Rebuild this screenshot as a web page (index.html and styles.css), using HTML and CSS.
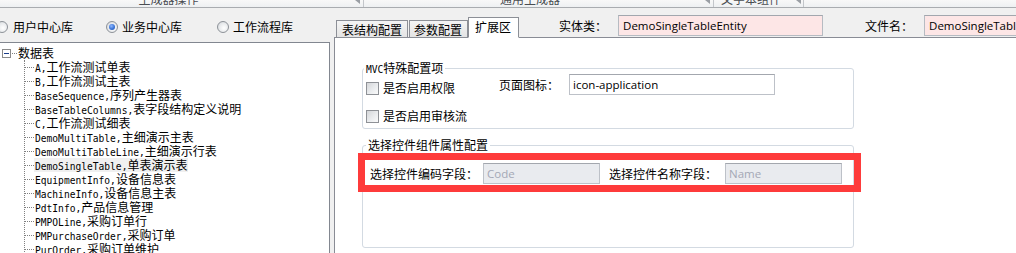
FILE: index.html
```html
<!DOCTYPE html>
<html lang="zh-CN">
<head>
<meta charset="utf-8">
<title>配置</title>
<link rel="stylesheet" href="styles.css">
</head>
<body>
<div class="ribbon">
  <div class="rgroup g1"><span class="rlabel">生成器操作</span><span class="launcher"><i></i></span></div>
  <div class="rgroup g2"><span class="rlabel">通用生成器</span><span class="launcher"><i></i></span></div>
  <div class="rgroup g3"><span class="rlabel">文字本组件</span><span class="launcher"><i></i></span></div>
</div>
<div class="main">
  <div class="left">
    <div class="radios">
      <label class="radio r1"><span class="circle"></span>用户中心库</label>
      <label class="radio r2"><span class="circle on"></span>业务中心库</label>
      <label class="radio r3"><span class="circle"></span>工作流程库</label>
    </div>
    <div class="tree">
      <div class="root"><span class="expander"></span><span class="rootdots"></span><span class="t">数据表</span></div>
      <ul class="children">
        <li><span class="t"><span class="code">A,</span>工作流测试单表</span></li>
        <li><span class="t"><span class="code">B,</span>工作流测试主表</span></li>
        <li><span class="t"><span class="code">BaseSequence,</span>序列产生器表</span></li>
        <li><span class="t"><span class="code">BaseTableColumns,</span>表字段结构定义说明</span></li>
        <li><span class="t"><span class="code">C,</span>工作流测试细表</span></li>
        <li><span class="t"><span class="code">DemoMultiTable,</span>主细演示主表</span></li>
        <li><span class="t"><span class="code">DemoMultiTableLine,</span>主细演示行表</span></li>
        <li><span class="t sel"><span class="code">DemoSingleTable,</span>单表演示表</span></li>
        <li><span class="t"><span class="code">EquipmentInfo,</span>设备信息表</span></li>
        <li><span class="t"><span class="code">MachineInfo,</span>设备信息主表</span></li>
        <li><span class="t"><span class="code">PdtInfo,</span>产品信息管理</span></li>
        <li><span class="t"><span class="code">PMPOLine,</span>采购订单行</span></li>
        <li><span class="t"><span class="code">PMPurchaseOrder,</span>采购订单</span></li>
        <li><span class="t"><span class="code">PurOrder,</span>采购订单维护</span></li>
      </ul>
    </div>
  </div>
  <div class="right">
    <div class="header">
      <div class="tabs">
        <span class="tab t1">表结构配置</span><span class="tab t2">参数配置</span><span class="tab active">扩展区</span>
      </div>
      <span class="hlabel l1">实体类：</span><span class="pink w1">DemoSingleTableEntity</span>
      <span class="hlabel l2">文件名：</span><span class="pink w2">DemoSingleTableEntity</span>
    </div>
    <div class="panel">
      <fieldset class="fs fs1">
        <legend><span class="code">MVC</span>特殊配置项</legend>
        <div class="fsrow">
          <div class="checks">
            <label class="check"><span class="box"></span>是否启用权限</label>
            <label class="check c2"><span class="box"></span>是否启用审核流</label>
          </div>
          <div class="iconfield">
            <span class="flabel">页面图标：</span><span class="text wide">icon-application</span>
          </div>
        </div>
      </fieldset>
      <fieldset class="fs fs2">
        <legend>选择控件组件属性配置</legend>
        <div class="pickrow">
          <span class="flabel">选择控件编码字段：</span><span class="text dis">Code</span>
          <span class="flabel second">选择控件名称字段：</span><span class="text dis">Name</span>
        </div>
      </fieldset>
      <div class="highlight"></div>
    </div>
  </div>
</div>
</body>
</html>
```
FILE: styles.css
```css
* { box-sizing: border-box; }
html, body { margin: 0; padding: 0; }
body {
  width: 1016px;
  height: 253px;
  overflow: hidden;
  background: #f0f0f0;
  font-family: "Noto Sans CJK SC", "Noto Sans", sans-serif;
  font-size: 12px;
  color: #000;
}

/* ribbon strip (cut off at top) */
.ribbon {
  height: 8px;
  display: flex;
  overflow: hidden;
  background: linear-gradient(#f8f8f8, #eef0f2);
  border-bottom: 1px solid #a9acb0;
}
.rgroup {
  display: flex;
  flex: none;
  height: 7px;
  border-right: 1px solid #c3c6ca;
}
.g1 { width: 364px; }
.g2 { width: 350px; }
.g3 { width: 90px; }
.rlabel {
  flex: 1;
  text-align: center;
  line-height: 14px;
  margin-top: -8px;
  color: #4a4d52;
  white-space: nowrap;
}
.launcher {
  display: flex;
  justify-content: flex-end;
  padding-right: 3px;
}
.g1 .launcher { width: 26px; }
.g2 .launcher { width: 17px; }
.g3 .launcher { width: 15px; padding-right: 2px; }
.launcher i {
  width: 5px;
  height: 4px;
  background: #9a9ea4;
  clip-path: polygon(0 0, 100% 0, 100% 100%);
}

.main {
  display: flex;
  height: 245px;
  overflow: hidden;
}

/* left column */
.left {
  width: 330px;
  flex: none;
  display: flex;
  flex-direction: column;
}
.radios {
  height: 34px;
  padding-top: 4px;
  display: flex;
  align-items: center;
}
.radio {
  display: flex;
  flex: none;
  align-items: center;
  gap: 4px;
  line-height: 16px;
  white-space: nowrap;
}
.r1 { width: 110px; margin-left: -4px; gap: 5px; }
.r2 { width: 111px; }
.circle {
  width: 12px;
  height: 12px;
  border-radius: 50%;
  border: 1px solid #8d9298;
  background: radial-gradient(circle at 60% 60%, #ffffff 0%, #e8eaec 55%, #c9cdd2 100%);
  display: flex;
  align-items: center;
  justify-content: center;
}
.circle.on::after {
  content: "";
  width: 6px;
  height: 6px;
  border-radius: 50%;
  background: radial-gradient(circle at 40% 35%, #8fb8ff 0%, #3b74d6 55%, #1d4ea8 100%);
}

.tree {
  flex: 1;
  background: #fff;
  border-top: 1px solid #828790;
  border-right: 1px solid #828790;
  padding-top: 3px;
  overflow: hidden;
}
.root {
  height: 14px;
  display: flex;
  align-items: center;
  padding-left: 2px;
}
.expander {
  width: 9px;
  height: 9px;
  border: 1px solid #8a8a8a;
  background: #fff;
  display: flex;
  align-items: center;
  justify-content: center;
}
.expander::after {
  content: "";
  width: 5px;
  height: 1px;
  background: #1a3d8a;
}
.rootdots {
  width: 5px;
  border-top: 1px dotted #808080;
  margin: 0 1px 0 1px;
}
.t { display: block; height: 14px; line-height: 14px; white-space: nowrap; padding-right: 1px; }
.code {
  font-family: "DejaVu Sans Mono", monospace;
  font-size: 9.6px;
  line-height: 1;
}
.children {
  list-style: none;
  margin: 0 0 0 24px;
  padding: 0;
  border-left: 1px dotted #808080;
}
.children li {
  height: 14px;
  display: flex;
  align-items: center;
}
.children li::before {
  content: "";
  width: 9px;
  border-top: 1px dotted #808080;
  margin-right: 1px;
}
.t.sel { background: #f0f0f0; padding-left: 1px; margin-left: -1px; }

/* right column */
.right {
  flex: 1;
  margin-left: 4px;
  display: flex;
  flex-direction: column;
  min-width: 0;
  overflow: hidden;
}
.header {
  height: 29px;
  display: flex;
  align-items: flex-start;
  white-space: nowrap;
}
.header > * { flex: none; }
.tabs {
  align-self: flex-end;
  display: flex;
  align-items: flex-end;
  margin-left: 2px;
  position: relative;
  z-index: 1;
  margin-bottom: -1px;
}
.tab {
  flex: none;
  height: 18px;
  line-height: 17px;
  border: 1px solid #8c8f96;
  background: linear-gradient(#f4f4f4, #e4e4e4);
  padding: 0 5px;
}
.t1 { margin-right: 1px; }
.t2 { padding: 0 5px 0 4px; }
.tab.active {
  height: 21px;
  line-height: 17px;
  background: #fff;
  border-bottom: 1px solid #fff;
  padding: 0 7px 0 6px;
}
.hlabel {
  margin-top: 7px;
  height: 21px;
  line-height: 21px;
}
.l1 { margin-left: 40px; width: 59px; }
.l2 { margin-left: 42px; width: 59px; }
.pink {
  margin-top: 7px;
  height: 21px;
  line-height: 19px;
  border: 1px solid #b6bbc2;
  border-top-color: #a2a7ae;
  background: #fde6e6;
  padding-left: 4px;
  font-family: "Open Sans", "Noto Sans", sans-serif;
  font-size: 11.5px;
  overflow: hidden;
}
.w1 { width: 205px; }
.w2 { width: 94px; border-right: 0; }

.panel {
  flex: 1;
  position: relative;
  background: #fff;
  border-top: 1px solid #898c95;
  border-left: 1px solid #898c95;
}

.fs {
  margin: 0 0 0 27px;
  width: 492px;
  border: 1px solid #d3dae2;
  border-radius: 3px;
  min-width: 0;
}
.fs legend {
  display: block;
  height: 12px;
  line-height: 12px;
  padding: 0 2px;
}
.fs1 {
  margin-top: 24px;
  padding: 0 0 4px 1px;
}
.fsrow {
  display: flex;
  align-items: flex-start;
}
.checks {
  width: 135px;
  padding: 6px 0 0 2px;
  display: flex;
  flex-direction: column;
  gap: 12px;
}
.check {
  display: flex;
  align-items: center;
  gap: 4px;
  height: 16px;
  line-height: 16px;
  white-space: nowrap;
}
.box {
  width: 13px;
  height: 13px;
  border: 1px solid #8e9196;
  background: linear-gradient(135deg, #d4d6d9 0%, #eceef0 60%, #fafafa 100%);
}
.iconfield {
  display: flex;
  align-items: center;
  height: 21px;
}
.flabel { line-height: 21px; white-space: nowrap; flex: none; }
.iconfield .flabel { width: 70px; }
.text {
  flex: none;
  height: 21px;
  line-height: 19px;
  border: 1px solid #bdc1c8;
  border-top-color: #a3a7ae;
  padding-left: 3px;
  font-family: "Open Sans", "Noto Sans", sans-serif;
  font-size: 11.5px;
  white-space: nowrap;
  overflow: hidden;
}
.wide { width: 206px; background: #fff; }

.fs2 {
  margin-top: 10px;
  padding: 12px 0 63px 3px;
}
.pickrow {
  display: flex;
  align-items: center;
  margin-left: 4px;
}
.dis {
  width: 117px;
  background: #e9ebef;
  color: #a4a8b6;
  margin-left: 5px;
}
.flabel.second { margin-left: 9px; }
.pickrow .dis:last-child { margin-left: 8px; }

/* red annotation rectangle drawn over the form */
.highlight {
  position: absolute;
  left: 23px;
  top: 115px;
  width: 503px;
  height: 39px;
  border: 7px solid #fe3b3b;
  pointer-events: none;
}
```
